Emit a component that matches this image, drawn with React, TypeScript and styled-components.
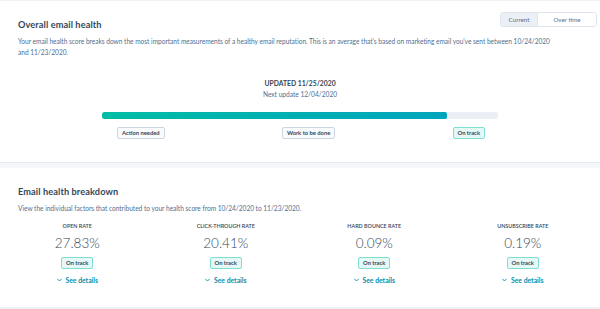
import React, { FunctionComponent } from 'react';
import styled, { createGlobalStyle } from 'styled-components';

const GlobalStyle = createGlobalStyle`
    body {
        margin: 0;
        background: #f5f8fa;
        font-family: Lato, "Open Sans", sans-serif;
        color: #33475b;
    }
`;

const Page = styled.div`
    width: 600px;
    height: 309px;
    padding-top: 1px;
    box-sizing: border-box;
    background: #eef1f5;
    overflow: hidden;
`;

const Card = styled.section<{ height: number; top: number }>`
    height: ${({ height }) => height}px;
    padding: ${({ top }) => top}px 18px 0;
    background: white;
    box-sizing: border-box;
`;

const Gap = styled.div`
    height: 6px;
    background: #f5f8fa;
    border-top: 1px solid #e5eaf0;
    box-sizing: border-box;
`;

const Header = styled.div`
    display: flex;
    justify-content: space-between;
    align-items: flex-start;
    margin-right: -15px;
`;

const Title = styled.h2<{ top?: number }>`
    margin: ${({ top = 0 }) => top}px 0 0 0;
    font-size: 9.2px;
    line-height: 14px;
    font-weight: 700;
    letter-spacing: 0.1px;
    color: #33475b;
`;

const Desc = styled.p`
    margin: 3.5px 0 0 0;
    font-size: 6.6px;
    line-height: 11.5px;
    letter-spacing: -0.03px;
    color: #516f90;
`;

const Toggle = styled.div`
    display: flex;
    height: 15px;
    border: 1px solid #dfe3eb;
    border-radius: 3px;
    box-sizing: border-box;
    overflow: hidden;
`;

const ToggleItem = styled.div<{ active?: boolean; w: number }>`
    width: ${({ w }) => w}px;
    display: flex;
    align-items: center;
    justify-content: center;
    font-size: 6.2px;
    color: #516f90;
    background: ${({ active }) => (active ? '#eaf0f6' : 'white')};
    border-right: ${({ active }) => (active ? '1px solid #dfe3eb' : 'none')};
`;

const Status = styled.div`
    margin-top: 19px;
    display: flex;
    flex-direction: column;
    align-items: center;
`;

const Updated = styled.div`
    font-size: 6.8px;
    line-height: 11px;
    font-weight: 700;
    color: #33475b;
`;

const NextUpdate = styled.div`
    font-size: 6.6px;
    line-height: 11px;
    color: #516f90;
`;

const Meter = styled.div`
    width: 396px;
    margin: 12px auto 0;
`;

const Track = styled.div`
    height: 7px;
    border-radius: 2px;
    background: #eaf0f6;
    overflow: hidden;
`;

const Fill = styled.div`
    height: 100%;
    border-radius: 2px;
    background: linear-gradient(90deg, #00bda5, #00a4bd);
`;

const Marks = styled.div`
    display: flex;
    justify-content: space-between;
    padding: 0 13px 0 15px;
    margin-top: 8px;
`;

const Tag = styled.span<{ good?: boolean }>`
    display: inline-flex;
    align-items: center;
    height: 12px;
    padding: 0 4px;
    box-sizing: border-box;
    font-size: 5.8px;
    font-weight: 700;
    color: #33475b;
    background: ${({ good }) => (good ? '#e5f8f6' : '#f8fafc')};
    border: 1px solid ${({ good }) => (good ? '#7fded2' : '#cbd6e2')};
    border-radius: 2px;
`;

const Grid = styled.div`
    display: grid;
    grid-template-columns: repeat(4, 1fr);
    margin: 8px -15px 0;
`;

const Metric = styled.div`
    display: flex;
    flex-direction: column;
    align-items: center;
`;

const Label = styled.div`
    font-size: 5.4px;
    line-height: 8px;
    font-weight: 600;
    color: #33475b;
    text-transform: uppercase;
`;

const Value = styled.div`
    margin-top: 4.5px;
    font-size: 13.5px;
    line-height: 17px;
    font-weight: 300;
    color: #33475b;
`;

const MetricTag = styled(Tag)`
    margin-top: 5px;
`;

const Details = styled.a`
    margin-top: 6.5px;
    display: flex;
    align-items: center;
    gap: 4px;
    font-size: 6.8px;
    line-height: 10px;
    font-weight: 700;
    color: #0091ae;
    text-decoration: none;
`;

const Chevron = () => (
    <svg width="5" height="4" viewBox="0 0 10 7">
        <path d="M1 1.5l4 4 4-4" fill="none" stroke="#0091ae" strokeWidth="1.8" strokeLinecap="round" strokeLinejoin="round" />
    </svg>
);

const metrics = [
    { label: 'Open rate', value: '27.83%' },
    { label: 'Click-through rate', value: '20.41%' },
    { label: 'Hard bounce rate', value: '0.09%' },
    { label: 'Unsubscribe rate', value: '0.19%' },
];

const App: FunctionComponent = () => {
    return (
        <Page>
            <GlobalStyle />
            <Card height={161} top={11}>
                <Header>
                    <Title top={6}>Overall email health</Title>
                    <Toggle>
                        <ToggleItem active w={36}>Current</ToggleItem>
                        <ToggleItem w={58}>Over time</ToggleItem>
                    </Toggle>
                </Header>
                <Desc>
                    Your email health score breaks down the most important measurements of a healthy email reputation. This is an average that's based on marketing email you've sent between 10/24/2020
                    <br />
                    and 11/23/2020.
                </Desc>
                <Status>
                    <Updated>UPDATED 11/25/2020</Updated>
                    <NextUpdate>Next update 12/04/2020</NextUpdate>
                </Status>
                <Meter>
                    <Track>
                        <Fill style={{ width: `${(345 / 396) * 100}%` }} />
                    </Track>
                    <Marks>
                        <Tag>Action needed</Tag>
                        <Tag>Work to be done</Tag>
                        <Tag good>On track</Tag>
                    </Marks>
                </Meter>
            </Card>
            <Gap />
            <Card height={139} top={17}>
                <Title>Email health breakdown</Title>
                <Desc>
                    View the individual factors that contributed to your health score from 10/24/2020 to 11/23/2020.
                </Desc>
                <Grid>
                    {metrics.map((m) => (
                        <Metric key={m.label}>
                            <Label>{m.label}</Label>
                            <Value>{m.value}</Value>
                            <MetricTag good>On track</MetricTag>
                            <Details href="#">
                                <Chevron />
                                See details
                            </Details>
                        </Metric>
                    ))}
                </Grid>
            </Card>
        </Page>
    );
};

export default App;
